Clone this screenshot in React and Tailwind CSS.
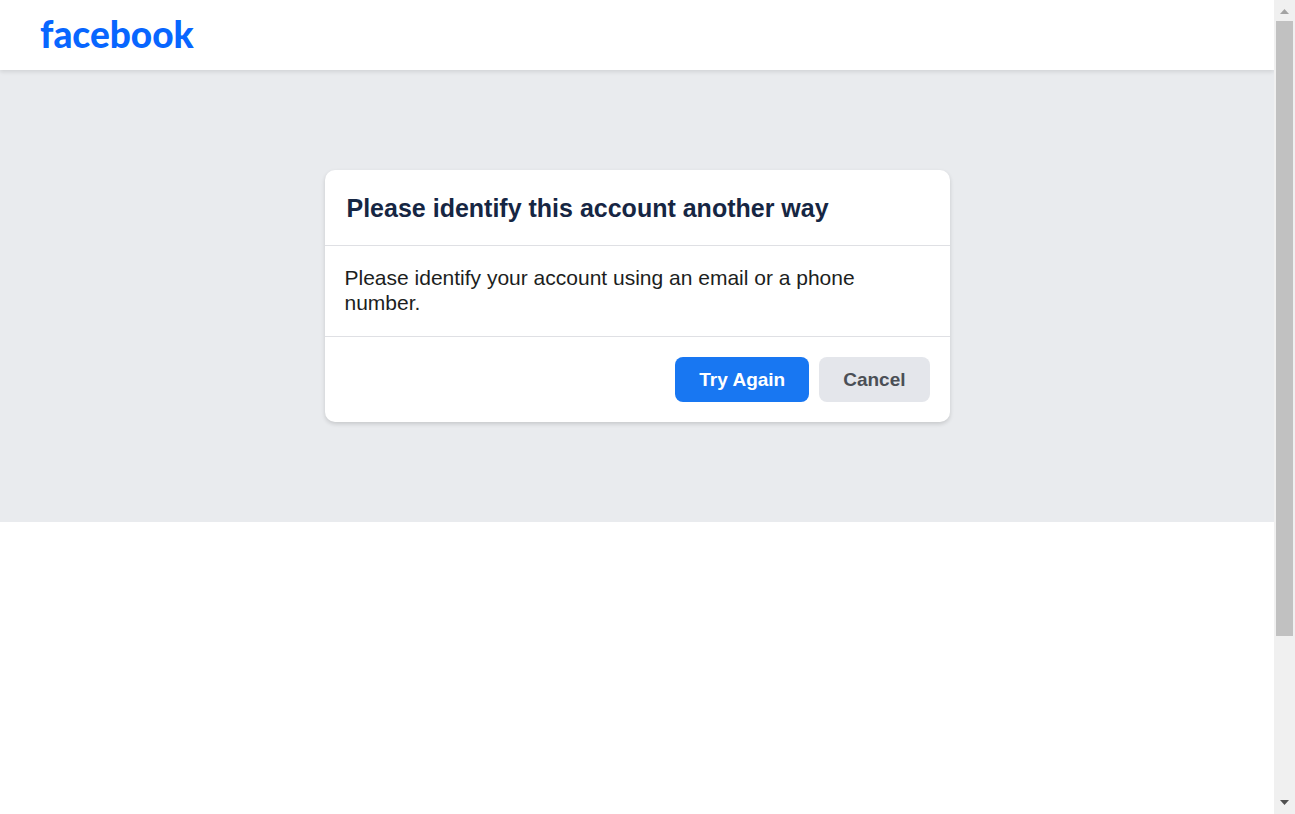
function Header() {
  return (
    <header className="relative flex h-[70px] items-center bg-white px-10 shadow-[0_2px_4px_rgba(0,0,0,0.1)]">
      <a
        href="#home"
        className="pb-[2px] font-[Lato,sans-serif] text-[37px] leading-[44px] font-black text-[#0866ff]"
      >
        facebook
      </a>
    </header>
  );
}

function IdentifyCard() {
  return (
    <section
      aria-labelledby="identify-title"
      className="w-full max-w-[625px] rounded-[10px] bg-white shadow-[0_2px_4px_rgba(0,0,0,0.15)]"
    >
      <div className="border-b border-[#dfe0e4] px-[22px] pt-[23px] pb-[21px]">
        <h2 id="identify-title" className="text-[25px] leading-[31px] font-bold text-[#162643]">
          Please identify this account another way
        </h2>
      </div>
      <p className="border-b border-[#dfe0e4] px-5 pt-[19px] pb-[21px] text-[21px] leading-[25px] text-[#1c1e21]">
        Please identify your account using an email or a phone number.
      </p>
      <div className="flex justify-end gap-[10px] p-5">
        <button
          type="button"
          className="h-[45px] rounded-[8px] bg-[#1877f2] px-6 text-[19px] leading-[25px] font-bold text-white"
        >
          Try Again
        </button>
        <button
          type="button"
          className="h-[45px] rounded-[8px] bg-[#e4e6eb] px-6 text-[19px] leading-[25px] font-bold text-[#4b4f56]"
        >
          Cancel
        </button>
      </div>
    </section>
  );
}

function ScrollBar() {
  return (
    <div
      aria-hidden="true"
      className="relative z-10 flex w-[21px] shrink-0 flex-col items-center bg-[#f0f0f0]"
    >
      <div className="flex h-[21px] items-center pt-[2px]">
        <svg width="9" height="5" viewBox="0 0 9 5" fill="#a3a3a3">
          <path d="M0 5 4.500 0 9 5z" />
        </svg>
      </div>
      <div className="flex w-[17px] flex-1 flex-col">
        <div className="grow-[615] bg-[#c1c1c1]" />
        <div className="grow-[157]" />
      </div>
      <div className="flex h-[21px] items-center pb-[2px]">
        <svg width="9" height="5" viewBox="0 0 9 5" fill="#505050">
          <path d="M0 0h9L4.500 5z" />
        </svg>
      </div>
    </div>
  );
}

export default function App() {
  return (
    <div className="flex min-h-screen bg-white font-[Liberation_Sans,Arial,sans-serif]">
      <div className="min-w-0 flex-1">
        <Header />
        <main className="flex justify-center bg-[#e9ebee] px-5 py-[100px]">
          <IdentifyCard />
        </main>
      </div>
      <ScrollBar />
    </div>
  );
}
